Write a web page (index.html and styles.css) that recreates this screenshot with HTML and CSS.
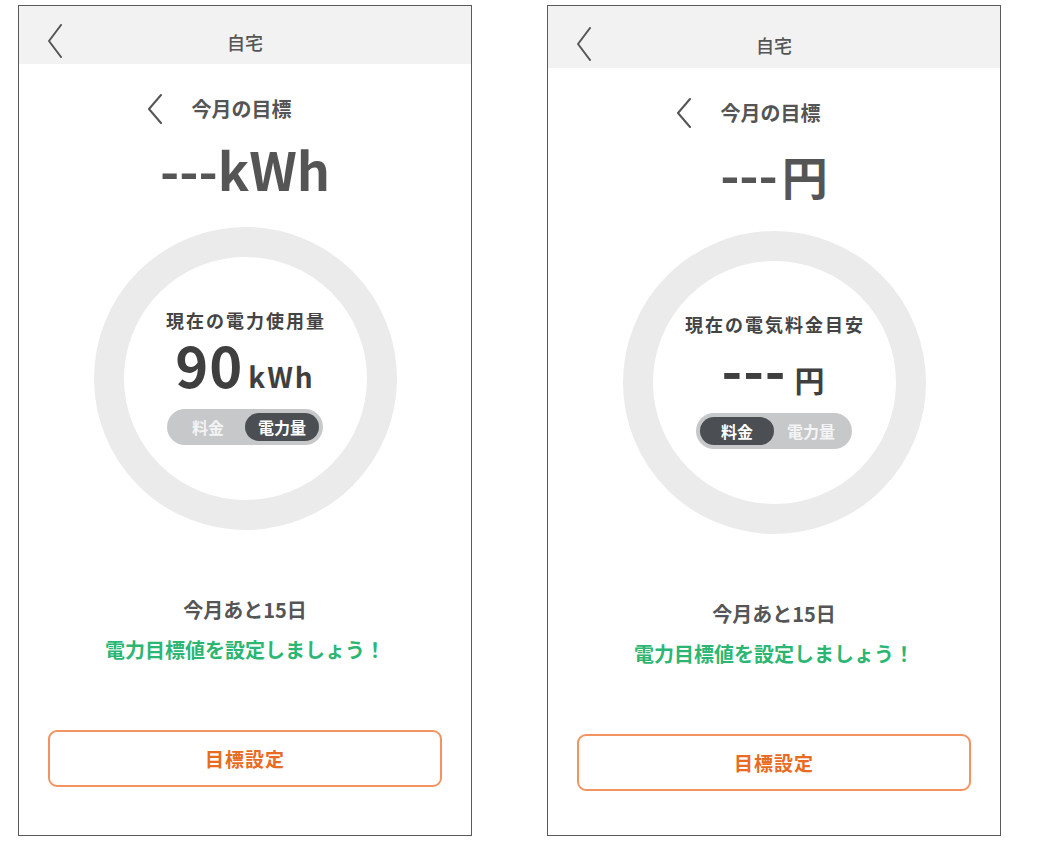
FILE: index.html
```html
<!DOCTYPE html>
<html lang="ja">
<head>
<meta charset="utf-8">
<title>今月の目標</title>
<link rel="stylesheet" href="styles.css">
</head>
<body>
<div class="screens">
  <section class="phone">
    <header class="appbar">
      <span class="appbar-back"><svg width="16" height="34" viewBox="0 0 16 34"><polyline points="14,1 2,17 14,33" fill="none" stroke="#555" stroke-width="2" stroke-linecap="round" stroke-linejoin="round"/></svg></span>
      <span class="appbar-title">自宅</span>
      <span></span>
    </header>
    <div class="subnav">
      <svg width="16" height="30" viewBox="0 0 16 30"><polyline points="14,1 2,15 14,29" fill="none" stroke="#555" stroke-width="2" stroke-linecap="round" stroke-linejoin="round"/></svg>
      <span class="subnav-title">今月の目標</span>
    </div>
    <div class="goal">---kWh</div>
    <div class="ring">
      <div class="ring-label">現在の電力使用量</div>
      <div class="ring-value"><span class="num">90</span><span class="unit">kWh</span></div>
      <div class="toggle">
        <span class="seg">料金</span>
        <span class="seg seg-on">電力量</span>
      </div>
    </div>
    <div class="days">今月あと15日</div>
    <div class="hint">電力目標値を設定しましょう！</div>
    <button class="cta">目標設定</button>
  </section>

  <section class="phone phone-tall">
    <header class="appbar">
      <span class="appbar-back"><svg width="16" height="34" viewBox="0 0 16 34"><polyline points="14,1 2,17 14,33" fill="none" stroke="#555" stroke-width="2" stroke-linecap="round" stroke-linejoin="round"/></svg></span>
      <span class="appbar-title">自宅</span>
      <span></span>
    </header>
    <div class="subnav">
      <svg width="16" height="30" viewBox="0 0 16 30"><polyline points="14,1 2,15 14,29" fill="none" stroke="#555" stroke-width="2" stroke-linecap="round" stroke-linejoin="round"/></svg>
      <span class="subnav-title">今月の目標</span>
    </div>
    <div class="goal">---<span class="goal-yen">円</span></div>
    <div class="ring">
      <div class="ring-label">現在の電気料金目安</div>
      <div class="ring-value"><span class="num">---</span><span class="unit unit-yen">円</span></div>
      <div class="toggle">
        <span class="seg seg-on">料金</span>
        <span class="seg">電力量</span>
      </div>
    </div>
    <div class="days">今月あと15日</div>
    <div class="hint">電力目標値を設定しましょう！</div>
    <button class="cta">目標設定</button>
  </section>
</div>
</body>
</html>
```
FILE: styles.css
```css
html, body {
  margin: 0;
  padding: 0;
  background: #ffffff;
}
body {
  font-family: "Noto Sans CJK JP", "Noto Sans", sans-serif;
  color: #555555;
}
.screens {
  display: flex;
  gap: 75px;
  padding: 5px 0 0 18px;
}
.phone {
  box-sizing: border-box;
  width: 454px;
  height: 831px;
  border: 1px solid #5a5a5a;
  display: flex;
  flex-direction: column;
  align-items: stretch;
  background: #fff;
}
.appbar {
  height: 58px;
  box-sizing: border-box;
  padding-top: 12px;
  background: #f2f2f2;
  display: grid;
  grid-template-columns: 1fr auto 1fr;
  align-items: center;
}
.phone-tall .appbar {
  height: 62px;
  padding-top: 14px;
}
.appbar-back {
  display: flex;
  padding-left: 28px;
}
.appbar-title {
  font-size: 18px;
  font-weight: 500;
  line-height: 24px;
  padding-top: 1px;
  color: #555;
}
.subnav {
  margin-top: 30px;
  height: 30px;
  display: flex;
  align-items: center;
  justify-content: center;
  gap: 29px;
  padding-right: 52px;
}
.subnav svg { display: block; }
.subnav-title {
  font-size: 20px;
  font-weight: 700;
  line-height: 30px;
  color: #555;
}
.goal {
  margin-top: 16px;
  height: 62px;
  line-height: 58px;
  text-align: center;
  font-size: 52px;
  font-weight: 700;
  color: #555;
}
.goal-yen {
  font-size: 46px;
  font-weight: 700;
  margin-left: 4px;
}
.ring {
  margin: 25px auto 0;
  box-sizing: border-box;
  width: 303px;
  height: 303px;
  border-radius: 50%;
  border: 30px solid #ebebeb;
  display: flex;
  flex-direction: column;
  align-items: center;
  justify-content: center;
}
.ring-label {
  font-size: 18px;
  font-weight: 700;
  line-height: 24px;
  letter-spacing: 2px;
  padding-left: 2px;
  margin-top: -4px;
  color: #444;
}
.ring-value {
  margin-top: 8px;
  height: 56px;
  line-height: 48px;
  display: flex;
  align-items: baseline;
  color: #3f3f3f;
  font-weight: 700;
}
.num {
  font-size: 56px;
  letter-spacing: 1px;
}
.unit {
  font-size: 28px;
  letter-spacing: 2px;
  margin-left: 5px;
}
.unit-yen {
  font-size: 30px;
  margin-left: 8px;
}
.toggle {
  margin-top: 13px;
  box-sizing: border-box;
  width: 156px;
  height: 36px;
  padding: 4px;
  border-radius: 18px;
  background: #c6c8ca;
  display: flex;
}
.seg {
  flex: 1;
  height: 28px;
  line-height: 28px;
  border-radius: 14px;
  text-align: center;
  font-size: 16px;
  font-weight: 700;
  color: #f4f4f4;
}
.seg-on {
  background: #4b4e52;
  color: #ffffff;
}
.days {
  margin-top: 66px;
  line-height: 28px;
  text-align: center;
  font-size: 20px;
  font-weight: 700;
  color: #555;
}
.hint {
  margin-top: 12px;
  line-height: 28px;
  text-align: center;
  font-size: 20px;
  font-weight: 700;
  color: #2bb673;
}
.cta {
  margin: 66px 29px 0;
  height: 57px;
  box-sizing: border-box;
  border: 2px solid #f29461;
  border-radius: 9px;
  background: #fff;
  font-family: "Noto Sans CJK JP", "Noto Sans", sans-serif;
  font-size: 19px;
  font-weight: 700;
  letter-spacing: 1px;
  color: #e96a21;
  cursor: pointer;
}
```
